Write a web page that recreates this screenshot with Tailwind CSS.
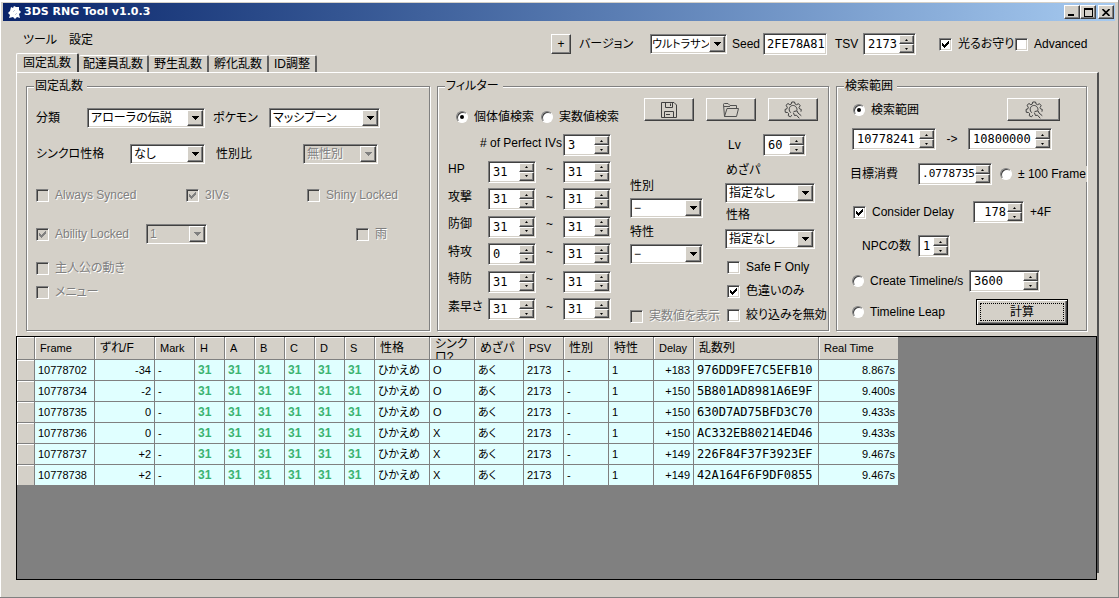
<!DOCTYPE html>
<html lang="ja">
<head>
<meta charset="utf-8">
<title>3DS RNG Tool v1.0.3</title>
<script src="https://cdn.jsdelivr.net/npm/@tailwindcss/browser@4"></script>
</head>
<body class="bg-[#d4d0c8] font-['Liberation_Sans','Noto_Sans_CJK_JP',sans-serif] text-xs leading-4 text-black [font-feature-settings:'palt']">
<div id="app"></div>
<script>
const SUNK = "border border-t-[#808080] border-l-[#808080] border-b-white border-r-white shadow-[inset_1px_1px_0_#404040,inset_-1px_-1px_0_#d4d0c8]";
const RAISED = "bg-[#d4d0c8] border border-t-white border-l-white border-b-[#404040] border-r-[#404040] shadow-[inset_-1px_-1px_0_#808080]";
const GROUP = "min-w-0 border border-[#808080] shadow-[1px_1px_0_#fff,inset_1px_1px_0_#fff]";
const LEGEND = "ml-[7px] h-[14px] bg-[#d4d0c8] pr-1 pl-px leading-[14px]";
const OFF = "text-[#808080] [text-shadow:1px_1px_0_#fff]";
const MONO = "font-['DejaVu_Sans_Mono',monospace]";

const combo = (name, value, width, disabled, text = "pl-[3px]") => `
  <div class="relative h-5 shrink-0 ${width}">
    <select aria-label="${name}" ${disabled ? "disabled" : ""} class="block size-full appearance-none pr-4 leading-4 opacity-100 ${text} ${disabled ? "bg-[#d4d0c8] " + OFF : "bg-white"} ${SUNK}"><option>${value}</option></select>
    <span class="pointer-events-none absolute top-[2px] right-[2px] bottom-[2px] flex w-4 items-center justify-center ${RAISED}">
      <svg class="h-[4px] w-[7px]" viewBox="0 0 7 4" shape-rendering="crispEdges"><path d="M0 0H7L3.500 4Z" fill="${disabled ? "#808080" : "#000"}"/></svg>
    </span>
  </div>`;

const spin = (name, value, width, text = "pl-[3px]") => `
  <div class="flex h-[22px] shrink-0 bg-white p-px ${width} ${SUNK}">
    <input type="text" aria-label="${name}" value="${value}" class="min-w-0 flex-1 bg-transparent ${MONO} ${text}">
    <div class="flex w-[15px] shrink-0 flex-col">
      <button type="button" aria-label="${name} +" class="flex min-h-0 flex-1 items-center justify-center ${RAISED}"><svg class="h-[2px] w-[3px]" viewBox="0 0 3 2"><path d="M0 2L1.500 0L3 2Z"/></svg></button>
      <button type="button" aria-label="${name} -" class="flex min-h-0 flex-1 items-center justify-center ${RAISED}"><svg class="h-[2px] w-[3px]" viewBox="0 0 3 2"><path d="M0 0L1.500 2L3 0Z"/></svg></button>
    </div>
  </div>`;

const check = (text, on, disabled, extra = "") => `
  <label class="flex shrink-0 items-center gap-[6px] whitespace-nowrap ${disabled ? OFF : ""} ${extra}">
    <span class="relative block size-[13px]">
      <input type="checkbox" ${on ? "checked" : ""} ${disabled ? "disabled" : ""} class="peer block size-[13px] appearance-none ${disabled ? "bg-[#d4d0c8]" : "bg-white"} ${SUNK}">
      <svg class="pointer-events-none absolute top-[3px] left-[3px] hidden size-[7px] peer-checked:block" viewBox="0 0 7 7" shape-rendering="crispEdges"><path d="M0 2V5L2.500 7L7 3V0L2.500 4Z" fill="${disabled ? "#808080" : "#000"}"/></svg>
    </span>${text}
  </label>`;

const radio = (group, text, on, extra = "") => `
  <label class="flex shrink-0 items-center gap-[6px] whitespace-nowrap ${extra}">
    <input type="radio" name="${group}" ${on ? "checked" : ""} class="grid size-3 appearance-none place-items-center rounded-full border border-t-[#808080] border-l-[#808080] border-b-white border-r-white bg-white shadow-[inset_1px_1px_0_#404040] checked:before:size-1 checked:before:rounded-full checked:before:bg-black checked:before:content-['']">${text}
  </label>`;

const SAVE = `<svg class="size-[18px]" viewBox="0 0 18 18" fill="none" stroke="#404040"><path d="M1.500 1.500H14L16.500 4V16.500H1.500Z"/><path d="M5.500 1.500V6.500H12.500V1.500M10.500 2.500V5M4.500 16V10.500H13.500V16M6 13.500H10"/></svg>`;
const OPEN = `<svg class="size-[18px]" viewBox="0 0 18 18" fill="none" stroke="#505050" stroke-linejoin="round"><path d="M2.500 15.500L1.500 3.500Q1.500 2.500 2.500 2.500H6L8 4.500H14.500V7.500M2.500 15.500L5 7.500H16.500L14.500 15.500ZM2 5.500H8"/></svg>`;
const GEAR = `<svg class="size-[18px]" viewBox="0 0 18 18" fill="none" stroke="#404040" stroke-linejoin="round" stroke-linecap="round"><path d="M7.500 14.500L6.500 15.800L4.300 14.800L4.600 12.500L3.500 11.500L1.300 11.300L1 8.500L3 7.700L3.300 6.300L2 4.300L4 2.500L5.800 3.700L7.200 3.100L7.800 1H10.500L11.200 3.100L12.500 3.700L14.500 2.700L16.200 4.700L15 6.500L15.500 7.800L17.300 8.500L17 10.300"/><path d="M6.500 11.500A4 4 0 1 1 13 9"/><path d="M10 10.500L13 9.800L14 12L17 14.500M9.500 12L10.500 14.500L12.500 14.200L15 17"/></svg>`;
const iconButton = (name, svg, width) => `<button type="button" aria-label="${name}" class="flex h-[23px] shrink-0 items-center justify-center ${width} ${RAISED}">${svg}</button>`;

const stat = (name, low) => `
  <div class="flex items-center">
    <span class="w-[40px] pb-[5px] whitespace-nowrap">${name}</span>
    ${spin(name + " min", low, "w-12")}
    <span class="w-[27px] pb-[5px] text-center">~</span>
    ${spin(name + " max", "31", "w-12")}
  </div>`;

const tab = (name, width) => `<button type="button" role="tab" class="h-[17px] rounded-t-[2px] border-t border-r-2 border-t-white border-r-[#606060] text-center leading-4 whitespace-nowrap ${width}">${name}</button>`;

const columns = [
  ["Frame", "w-[60px]"], ["ずれ/F", "w-[60px]"], ["Mark", "w-[40px]"],
  ["H", "w-[30px]"], ["A", "w-[30px]"], ["B", "w-[30px]"], ["C", "w-[30px]"], ["D", "w-[30px]"], ["S", "w-[30px]"],
  ["性格", "w-[55px]"], ["シンクロ?", "w-[45px]"], ["めざパ", "w-[49px]"], ["PSV", "w-[40px]"],
  ["性別", "w-[45px]"], ["特性", "w-[45px]"], ["Delay", "w-[40px]"], ["乱数列", "w-[125px]"], ["Real Time", "w-[80px]"]
];
const results = [
  ["10778702", "-34", "O", "+183", "976DD9FE7C5EFB10", "8.867s"],
  ["10778734", "-2", "O", "+150", "5B801AD8981A6E9F", "9.400s"],
  ["10778735", "0", "O", "+150", "630D7AD75BFD3C70", "9.433s"],
  ["10778736", "0", "X", "+150", "AC332EB80214ED46", "9.433s"],
  ["10778737", "+2", "X", "+149", "226F84F37F3923EF", "9.467s"],
  ["10778738", "+2", "X", "+149", "42A164F6F9DF0855", "9.467s"]
];
const cell = (text, extra = "") => `<td class="h-[21px] border-r border-b border-[#808080] bg-[#e0ffff] px-[3px] leading-4 whitespace-nowrap ${extra}">${text}</td>`;
const row = ([frame, shift, sync, delay, rand, time]) => `<tr>
  <th scope="row" aria-label="${frame}" class="border-r border-b border-[#808080] bg-[#d4d0c8] shadow-[inset_1px_1px_0_#fff]"></th>
  ${cell(frame)}${cell(shift, "text-right")}${cell("-")}${cell("31", "font-bold text-[#3cb371] text-xs").repeat(6)}
  ${cell("ひかえめ")}${cell(sync)}${cell("あく")}${cell("2173")}${cell("-")}${cell("1")}${cell(delay, "text-right")}
  ${cell(rand, "text-xs " + MONO)}${cell(time, "text-right")}</tr>`;

document.getElementById("app").innerHTML = `
<div class="flex min-h-screen flex-col border-r border-b border-[#808080] px-[3px] pt-[3px] shadow-[inset_1px_1px_0_#fff,inset_0_2px_0_#fff]">
  <header class="flex h-[18px] shrink-0 items-center bg-linear-to-r from-[#0a246a] to-[#a6caf0] pr-px pl-[5px]">
    <svg class="size-[13px]" viewBox="0 0 13 13"><path d="M3 1L5 2L6 0L8 1L11 1L11 4L13 6L11 8L12 12L9 11L7 13L5 11L1 12L2 9L0 7L2 5Z" fill="#fff"/><path d="M5 6L7 4M7 9L9 7" stroke="#c0c8d8"/></svg>
    <h1 class="ml-[3px] flex-1 font-['DejaVu_Sans','Noto_Sans_CJK_JP',sans-serif] text-[11px] font-bold whitespace-nowrap text-white">3DS RNG Tool v1.0.3</h1>
    <button type="button" aria-label="最小化" class="flex h-[14px] w-4 items-center justify-center ${RAISED}"><svg class="h-2 w-2" viewBox="0 0 8 8"><path d="M0 6H6V8H0Z"/></svg></button>
    <button type="button" aria-label="最大化" class="flex h-[14px] w-4 items-center justify-center ${RAISED}"><svg class="h-[9px] w-[9px]" viewBox="0 0 9 9" shape-rendering="crispEdges"><path fill-rule="evenodd" d="M0 0H9V9H0ZM1 2V8H8V2Z"/></svg></button>
    <button type="button" aria-label="閉じる" class="ml-[2px] flex h-[14px] w-4 items-center justify-center ${RAISED}"><svg class="h-[7px] w-2" viewBox="0 0 8 7" stroke="#000" stroke-width="1.600"><path d="M.5 0L7.500 7M7.500 0L.5 7"/></svg></button>
  </header>

  <div class="flex h-8 shrink-0 justify-between">
    <nav class="flex items-start gap-3 pt-[11px] pl-5 whitespace-nowrap">
      <button type="button">ツール</button>
      <button type="button">設定</button>
    </nav>
    <div class="mt-3 flex h-[22px] items-center pr-[30px] whitespace-nowrap">
      <button type="button" class="h-5 w-5 leading-4 ${RAISED}">+</button>
      <span class="ml-2 w-[71px]">バージョン</span>
      ${combo("バージョン", "ウルトラサン", "w-[77px]", false, "pl-px text-[11px]")}
      <label for="seed" class="ml-[5px] w-[31px]">Seed</label>
      <input id="seed" type="text" value="2FE78A81" class="h-[22px] w-16 bg-white pl-[3px] ${MONO} ${SUNK}">
      <span class="ml-2 w-7">TSV</span>
      ${spin("TSV", "2173", "w-[53px]")}
      ${check("光るお守り", true, false, "ml-[23px] w-[76px]")}
      ${check("Advanced", false, false, "w-[70px]")}
    </div>
  </div>

  <div role="tablist" class="flex h-[19px] shrink-0 items-end pl-[13px]">
    <button type="button" role="tab" aria-selected="true" class="h-[19px] w-[63px] rounded-t-[2px] border-t border-r-2 border-l border-t-white border-r-[#404040] border-l-white leading-4 whitespace-nowrap">固定乱数</button>
    ${tab("配達員乱数", "w-[70px]")}
    ${tab("野生乱数", "w-[60px]")}
    ${tab("孵化乱数", "w-[60px]")}
    ${tab("ID調整", "w-12")}
  </div>

  <main class="mr-4 mb-6 ml-[13px] flex flex-1 flex-col border-t border-r-2 border-l border-t-white border-r-[#505050] border-l-white pt-[6px]">
    <div class="grid grid-cols-[404fr_392fr_251fr] gap-[7px] pr-[10px] pl-[9px]">

      <fieldset class="${GROUP}">
        <legend class="${LEGEND}">固定乱数</legend>
        <div class="pt-[7px] pl-[9px] whitespace-nowrap">
          <div class="flex h-9 items-center">
            <span class="w-[51px]">分類</span>${combo("分類", "アローラの伝説", "w-[118px]")}
            <span class="ml-2 w-14">ポケモン</span>${combo("ポケモン", "マッシブーン", "w-[111px]")}
          </div>
          <div class="flex h-9 items-center">
            <span class="w-[94px]">シンクロ性格</span>${combo("シンクロ性格", "なし", "w-[75px]")}
            <span class="ml-[11px] w-[87px]">性別比</span>${combo("性別比", "無性別", "w-[75px]", true)}
          </div>
          <div class="flex h-[46px] items-center">
            ${check("Always Synced", false, true, "w-[150px]")}
            ${check("3IVs", true, true, "w-[121px]")}
            ${check("Shiny Locked", false, true)}
          </div>
          <div class="flex h-8 items-center">
            ${check("Ability Locked", true, true, "w-[110px]")}
            ${combo("Ability", "1", "w-[61px]", true)}
            ${check("雨", false, true, "ml-[149px]")}
          </div>
          ${check("主人公の動き", false, true, "mt-[6px] h-6")}
          ${check("メニュー", false, true, "h-6")}
        </div>
      </fieldset>

      <fieldset class="${GROUP} pb-[3px]">
        <legend class="${LEGEND}">フィルター</legend>
        <div class="flex h-[39px] pl-[18px] whitespace-nowrap">
          ${radio("mode", "個体値検索", true, "mt-2 w-[85px]")}
          ${radio("mode", "実数値検索", false, "mt-2 w-[103px]")}
          <div class="flex gap-3 pt-[5px]">
            ${iconButton("保存", SAVE, "w-[50px]")}${iconButton("開く", OPEN, "w-[50px]")}${iconButton("設定", GEAR, "w-[50px]")}
          </div>
        </div>
        <div class="flex pl-[10px] whitespace-nowrap">
          <div class="w-[163px] shrink-0">
            <div class="flex h-[26px] items-center justify-end gap-px">
              <span class="pb-1"># of Perfect IVs</span>${spin("# of Perfect IVs", "3", "w-12")}
            </div>
            <div class="grid h-[165px] auto-rows-fr">
              ${stat("HP", "31")}${stat("攻撃", "31")}${stat("防御", "31")}${stat("特攻", "0")}${stat("特防", "31")}${stat("素早さ", "31")}
            </div>
          </div>
          <div class="ml-[19px] w-[95px] shrink-0 pt-11">
            <div class="h-[22px] pt-[2px]">性別</div>
            ${combo("性別", "−", "w-[73px]")}
            <div class="h-[26px] pt-[6px]">特性</div>
            ${combo("特性", "−", "w-[73px]")}
            ${check("実数値を表示", false, true, "mt-[42px] h-5")}
          </div>
          <div class="shrink-0">
            <div class="flex h-[26px] items-center"><span class="w-[38px] pl-[3px]">Lv</span>${spin("Lv", "60", "w-[43px]")}</div>
            <div class="h-[25px] pt-1 pl-px">めざパ</div>
            ${combo("めざパ", "指定なし", "w-[90px]")}
            <div class="h-[26px] pt-1 pl-px">性格</div>
            ${combo("性格", "指定なし", "w-[90px]")}
            ${check("Safe F Only", false, false, "mt-[6px] ml-[2px] h-6")}
            ${check("色違いのみ", true, false, "ml-[2px] h-6")}
            ${check("絞り込みを無効", false, false, "ml-[2px] h-6")}
          </div>
        </div>
      </fieldset>

      <fieldset class="${GROUP}">
        <legend class="${LEGEND}">検索範囲</legend>
        <div class="pl-[15px] whitespace-nowrap">
          <div class="flex h-[33px] items-center">
            ${radio("range", "検索範囲", true, "w-[155px] pl-px")}
            ${iconButton("範囲設定", GEAR, "w-[53px]")}
          </div>
          <div class="flex h-[26px] items-center">
            ${spin("開始", "10778241", "w-[84px]")}<span class="w-8 text-center">-&gt;</span>${spin("終了", "10800000", "w-[84px]")}
          </div>
          <div class="-ml-[2px] flex h-11 items-center">
            <span class="w-[68px]">目標消費</span>
            ${spin("目標消費", ".0778735", "w-[74px]", "text-right text-[11px]")}
            ${radio("range", "± 100 Frame", false, "-mr-px ml-2 flex-1 bg-[#d4d0c8]")}
          </div>
          <div class="flex h-8 items-center">
            ${check("Consider Delay", true, false, "w-[121px] pl-px")}
            ${spin("Delay", "178", "w-[51px]", "pr-px text-right")}<span class="ml-[6px]">+4F</span>
          </div>
          <div class="flex h-9 items-center">
            <span class="w-[66px] pl-[10px]">NPCの数</span>${spin("NPCの数", "1", "w-8")}
          </div>
          <div class="flex h-[34px] items-center">
            ${radio("range", "Create Timeline/s", false, "w-[117px]")}${spin("Timeline", "3600", "w-[71px]")}
          </div>
          <div class="flex h-7 items-center">
            ${radio("range", "Timeline Leap", false, "w-[124px]")}
            <button type="button" class="h-[26px] w-[92px] border border-black bg-[#d4d0c8] p-[3px] shadow-[inset_1px_1px_0_#fff,inset_-1px_-1px_0_#404040,inset_-2px_-2px_0_#808080]"><span class="block border border-dotted border-black leading-4">計算</span></button>
          </div>
        </div>
      </fieldset>
    </div>

    <section class="mt-[5px] -mb-[7px] -ml-px flex-1 border border-black bg-[#808080] text-[11px]">
      <table class="w-[882px] table-fixed border-separate border-spacing-0 text-left">
        <thead><tr>
          <th aria-label="行" class="w-[18px] border-r border-b border-[#808080] bg-[#d4d0c8] shadow-[inset_1px_1px_0_#fff]"></th>
          ${columns.map(([name, width]) => `<th scope="col" class="${width} border-r border-b border-[#808080] bg-[#d4d0c8] p-0 pl-[5px] font-normal shadow-[inset_1px_1px_0_#fff]"><div class="flex h-[22px] overflow-hidden leading-[13px] ${name.startsWith("シ") ? "items-start pt-px break-all" : "items-center whitespace-nowrap"} ${/^[A-Z]/.test(name) ? "" : "text-xs leading-[13px]"}">${name}</div></th>`).join("")}
        </tr></thead>
        <tbody>${results.map(row).join("")}</tbody>
      </table>
    </section>
  </main>
</div>`;
</script>
</body>
</html>
